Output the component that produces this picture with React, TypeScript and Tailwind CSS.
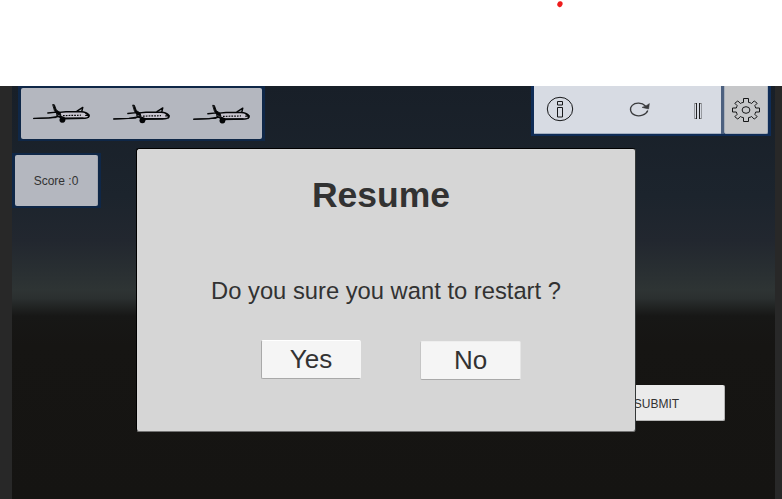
function Plane({ className = "" }: { className?: string }) {
  return (
    <svg viewBox="0 0 58 22" className={`h-[22px] w-[58px] shrink-0 ${className}`} fill="none" stroke="#050607" strokeLinecap="round" strokeLinejoin="round">
      <path d="M25 9.6 L34 8.8 L49 8.8 Q54.5 9 57 12 Q57.6 15 53 15.2 L31 15.8 L25 12.6Z" fill="#c8c5cf" strokeWidth="1.4" />
      <path d="M21 1.6 L22.4 1.8 L24.3 7 L28 9.4 L29 12.6 L24.8 10.6 L22.7 8Z" fill="#050607" strokeWidth="0.9" />
      <path d="M15.8 10 L24.5 9.2 L27 11.4" strokeWidth="1.3" />
      <path d="M1.8 15.4 L17 14.9 L28 13.2 L33 15.2 L51 15.2" strokeWidth="1.4" />
      <path d="M1.8 15.6 L24 14.6" strokeWidth="1" />
      <path d="M45 8.2 L50.8 4.4 L49.8 8.2" strokeWidth="1.4" />
      <path d="M31 12.6 L49 12.2" strokeWidth="1.2" strokeDasharray="1.7 1.1" strokeLinecap="butt" />
      <path d="M53.5 10 L56.5 12 L53.8 12.4 M56.8 12.2 L56.4 14.2" strokeWidth="1.4" />
      <ellipse cx="30.4" cy="16.9" rx="2.7" ry="2.6" fill="#050607" strokeWidth="0.4" />
    </svg>
  );
}

function InfoIcon() {
  return (
    <svg viewBox="0 0 28 26" className="ml-[12px] mt-[10px] h-[26px] w-[28px] shrink-0" fill="none" stroke="#17181a" strokeWidth="1">
      <ellipse cx="14" cy="13" rx="12.7" ry="11.7" />
      <path d="M11.5 5.5h5v3.5h-5zM11.5 11.5h5v9.5h-5z" />
    </svg>
  );
}

function ReloadIcon() {
  return (
    <svg viewBox="0 0 22 18" className="ml-[54px] mt-[14px] h-[18px] w-[22px] shrink-0" fill="none" stroke="#3a3b3d" strokeWidth="1.3">
      <path d="M17.5 6 C14 2.6 7.5 2.2 4.2 5.4 C1 8.6 2.5 13.6 7 15.2 C11.5 16.8 18 15.2 19.8 10.6" />
      <path d="M14 7.4 L20.6 9 L21.4 3.6 L19 5.2Z" fill="#3a3b3d" strokeWidth="0.5" />
    </svg>
  );
}

function PauseIcon() {
  return (
    <svg viewBox="0 0 10 16" className="ml-[43px] mt-[17px] h-[16px] w-[10px] shrink-0" fill="none" strokeWidth="1" shapeRendering="crispEdges">
      <path d="M1 0.5h3M1 15.5h3M6 0.5h3M6 15.5h3" stroke="#777" />
      <path d="M1.5 0v16M8.5 0v16" stroke="#96999f" />
      <path d="M3.5 0v16M6.5 0v16" stroke="#202123" />
    </svg>
  );
}

function GearIcon() {
  return (
    <svg viewBox="-14 -12 28 24" className="h-6 w-7" fill="none" stroke="#151617" strokeWidth="1">
      <path d="M-2.5 -11.5H2.5V-7.6Q4.5 -7.4 5.6 -6.5L8.2 -9.1L11.2 -6.7L8.7 -4.2Q9.5 -3.2 9.7 -2H13.5V2H9.7Q9.5 3.2 8.7 4.2L11.2 6.7L8.2 9.1L5.6 6.5Q4.5 7.4 2.5 7.6V11.5H-2.5V7.6Q-4.5 7.4 -5.6 6.5L-8.2 9.1L-11.2 6.7L-8.7 4.2Q-9.5 3.2 -9.7 2H-13.5V-2H-9.7Q-9.5 -3.2 -8.7 -4.2L-11.2 -6.7L-8.2 -9.1L-5.6 -6.5Q-4.5 -7.4 -2.5 -7.6Z" />
      <ellipse rx="3.9" ry="3.3" />
    </svg>
  );
}

export default function App() {
  return (
    <div className="flex h-[499px] w-[782px] flex-col overflow-hidden bg-white font-['Liberation_Sans',Arial,sans-serif] text-[#323232]">
      <header className="h-[86px] shrink-0 pl-[557px]">
        <svg viewBox="0 0 6 8" className="h-2 w-1.5">
          <ellipse cx="3" cy="4.2" rx="2.6" ry="3" fill="#ee1c1c" transform="rotate(20 3 4)" />
        </svg>
      </header>
      <div className="flex flex-1 bg-[#282828] pl-[12px] pr-[7px]">
        <main className="relative flex-1 bg-[linear-gradient(to_bottom,#181f28_0px,#1c242d_110px,#22272f_155px,#292f32_185px,#2e3434_204px,#2b3030_212px,#171716_230px,#161513_260px,#151412_413px)]">
          <div className="flex justify-between pl-[6px] pr-[4px]">
            <div className="flex h-[55px] w-[247px] bg-[#0f2747] pb-[2px] pl-[3px] pr-[3px] pt-[2px]">
              <div className="flex flex-1 gap-[22px] rounded-[2px] bg-[#b4b7bf] pl-[11px] pt-[14.5px]">
                <Plane />
                <Plane className="translate-y-[0.5px]" />
                <Plane className="translate-y-[0.75px]" />
              </div>
            </div>
            <div className="flex h-[50px] w-[240px] bg-[#0f2c56] pb-[2px] pl-[3px] pr-[3px]">
              <div className="flex w-[187px] items-start border-b border-[#a4afc0] bg-[#d7dbe3]">
                <InfoIcon />
                <ReloadIcon />
                <PauseIcon />
              </div>
              <div className="w-[3px] bg-[#4c607f]" />
              <div className="flex flex-1 items-center justify-center rounded-b-[2px] border-x border-b border-[#a8afb9] bg-[#c6c7c9]">
                <GearIcon />
              </div>
            </div>
          </div>
          <div className="mt-[12px] h-[55px] w-[89px] bg-[#0f2747] py-[2px] pl-[3px] pr-[3px]">
            <div className="flex h-full items-center justify-center rounded-[2px] border-r border-[#a3a7af] bg-[#b4b7bf] text-[12px]">
              Score :0
            </div>
          </div>
          <div className="mt-[177px] flex justify-end pr-[50px]">
            <button className="h-[36px] w-[136px] rounded-[2px] border-b border-r border-[#b5b5b5] bg-[#ebebeb] pt-[2px] text-[12px]">SUBMIT</button>
          </div>
          <section role="dialog" className="absolute left-[124px] top-[62px] flex h-[284px] w-[500px] flex-col items-center rounded-[3px] border border-b-[#727272] border-l-black border-r-[#343838] border-t-black bg-[#d6d6d6]">
            <h1 className="mt-[25px] -translate-x-[5px] text-[35.5px] font-bold leading-[42px]">Resume</h1>
            <p className="mt-[60px] whitespace-nowrap text-[23.75px] leading-[30px]">Do you sure you want to restart ?</p>
            <div className="mt-[34px] flex w-full gap-[59px] pl-[124px]">
              <button className="h-[39px] w-[100px] rounded-[2px] border border-b-[#a9a9a9] border-l-[#a9a9a9] border-r-[#f5f5f5] border-t-white bg-[#f5f5f5] pb-px text-[26px] leading-[34px]">Yes</button>
              <button className="mt-px h-[39px] w-[101px] rounded-[2px] border border-b-[#a9a9a9] border-l-[#c5c5c5] border-r-[#e5e5e5] border-t-[#eeeeee] bg-[#f5f5f5] pb-px text-[26px] leading-[34px]">No</button>
            </div>
          </section>
        </main>
      </div>
    </div>
  );
}
